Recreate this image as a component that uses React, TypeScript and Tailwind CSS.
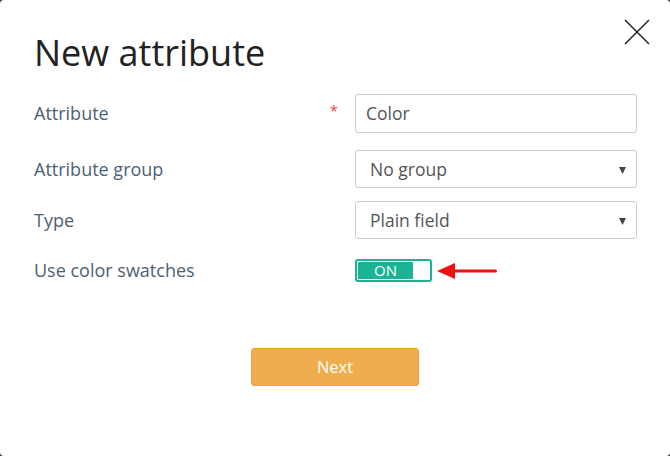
const labelCls = "text-[18px] text-[#4e6173]";

function SelectBox({ value, className }: { value: string; className?: string }) {
  return (
    <div className={`relative flex h-[38px] items-center rounded-[3px] border border-[#cccccc] bg-white pl-[14px] text-[17.5px] text-[#555555] ${className ?? ''}`}>
      <span>{value}</span>
      <svg className="absolute right-[10px] top-[16px]" width="7" height="7" viewBox="0 0 7 7">
        <path d="M0 0 L7 0 L3.5 7 Z" fill="#444444" />
      </svg>
    </div>
  );
}

export default function App() {
  return (
    <div className="h-[456px] w-[670px] bg-[#3a3a3a]" style={{ fontFamily: '"Open Sans", "Noto Sans", sans-serif' }}>
      <div className="relative h-full w-full rounded-[4px] bg-white px-[34px] pt-[28px]">
        <button type="button" className="absolute right-[20px] top-[19px] text-[#222222]">
          <svg width="26" height="26" viewBox="0 0 26 26" fill="none" stroke="currentColor" strokeWidth="1.5">
            <path d="M1 1 L25 25 M25 1 L1 25" />
          </svg>
        </button>

        <h1 className="text-[36px] leading-[50px] font-normal text-[#222222]">New attribute</h1>

        <div className="mt-[16px] grid grid-cols-[321px_282px] items-center">
          <div className="relative flex h-[39px] items-center">
            <span className={labelCls}>Attribute</span>
            <span className="absolute right-[17px] top-[5px] text-[15px] text-[#e04b4b]">*</span>
          </div>
          <div className="flex h-[39px] items-center rounded-[3px] border border-[#cccccc] bg-white pl-[10px] text-[17.5px] text-[#555555]">
            Color
          </div>

          <div className="mt-[17px] flex h-[38px] items-center">
            <span className={labelCls}>Attribute group</span>
          </div>
          <SelectBox value="No group" className="mt-[17px]" />

          <div className="mt-[13px] flex h-[38px] items-center">
            <span className={labelCls}>Type</span>
          </div>
          <SelectBox value="Plain field" className="mt-[13px]" />

          <div className="mt-[20px] flex h-[22px] items-center">
            <span className={labelCls}>Use color swatches</span>
          </div>
          <div className="mt-[20px] flex items-center">
            <div className="flex h-[23px] w-[77px] rounded-[3px] border-2 border-[#1ab394] bg-white p-[1px]">
              <div className="flex w-[55px] items-center justify-center bg-[#1ab394] text-[15px] leading-none text-white">
                ON
              </div>
            </div>
            <svg className="ml-[5px]" width="60" height="18" viewBox="0 0 60 18">
              <path d="M0 9 L18 1 L18 17 Z" fill="#ee1111" />
              <rect x="16" y="7.5" width="44" height="3" rx="1.5" fill="#ee1111" />
            </svg>
          </div>
        </div>

        <div className="mt-[66px] flex justify-center">
          <button type="button" className="h-[38px] w-[168px] rounded-[3px] border border-[#eea236] bg-[#f0ad4e] text-[16.5px] text-white">
            Next
          </button>
        </div>
      </div>
    </div>
  );
}
